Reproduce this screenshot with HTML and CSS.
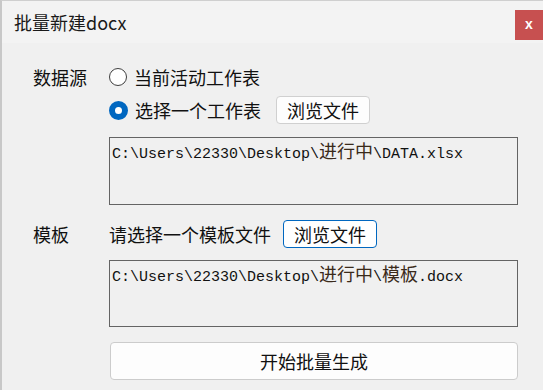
FILE: index.html
```html
<!DOCTYPE html>
<html>
<head>
    <title>批量新建docx</title>
    <link rel="stylesheet" href="styles.css">
</head>
<body>
    <div class="window">
        <div class="titlebar">
            <span class="title">批量新建docx</span>
            <span class="close">x</span>
        </div>
        <div class="content">
            <div class="section">
                <div class="label">数据源</div>
                <div class="field">
                    <div class="option">
                        <span class="radio"></span>
                        <span>当前活动工作表</span>
                    </div>
                    <div class="option option-second">
                        <span class="radio checked"></span>
                        <span>选择一个工作表</span>
                        <button class="browse browse-sheet">浏览文件</button>
                    </div>
                    <div class="path path-data">C:\Users\22330\Desktop\<span class="cjk">进行中</span>\DATA.xlsx</div>
                </div>
            </div>
            <div class="section section-template">
                <div class="label">模板</div>
                <div class="field">
                    <div class="option">
                        <span>请选择一个模板文件</span>
                        <button class="browse browse-template focused">浏览文件</button>
                    </div>
                    <div class="path path-template">C:\Users\22330\Desktop\<span class="cjk">进行中</span>\<span class="cjk">模板</span>.docx</div>
                    <button class="generate">开始批量生成</button>
                </div>
            </div>
        </div>
    </div>
</body>
</html>
```

FILE: styles.css
```css
html, body {
    margin: 0;
    padding: 0;
    background-color: #f0f0f0;
}
.window {
    width: 541px;
    height: 389px;
    border-top: 1px solid #cfcfcf;
    border-left: 2px solid #c8c8c8;
    font-family: "Noto Sans CJK SC", "Noto Sans", sans-serif;
    color: #111;
    overflow: hidden;
}
.titlebar {
    height: 42px;
    background-color: #f3f3f3;
    display: flex;
    align-items: center;
    justify-content: space-between;
    padding-left: 12px;
}
.title {
    font-size: 18px;
    color: #1a1a1a;
    margin-top: -1px;
}
.close {
    align-self: flex-start;
    margin-top: 9px;
    width: 28px;
    height: 30px;
    background-color: #c75050;
    color: #fff;
    font-family: "Liberation Sans", sans-serif;
    font-weight: bold;
    font-size: 14px;
    line-height: 28px;
    text-align: center;
}
.content {
    padding: 20px 0 0 31px;
}
.section {
    display: flex;
}
.section-template {
    margin-top: 15px;
}
.label {
    width: 76px;
    font-size: 18px;
    line-height: 28px;
    flex-shrink: 0;
}
.field {
    width: 409px;
    display: flex;
    flex-direction: column;
}
.option {
    display: flex;
    align-items: center;
    height: 28px;
    font-size: 18px;
}
.option-second {
    margin-top: 5px;
}
.radio {
    width: 16px;
    height: 16px;
    border: 1.5px solid #3f3f3f;
    border-radius: 50%;
    margin-right: 7px;
    background-color: #fff;
    box-sizing: content-box;
}
.radio.checked {
    width: 7px;
    height: 7px;
    border: 6px solid #0067c0;
    background-color: #fff;
}
.browse {
    width: 94px;
    height: 28px;
    padding: 0;
    font-family: "Noto Sans CJK SC", sans-serif;
    font-size: 18px;
    line-height: 24px;
    color: #111;
    background-color: #fdfdfd;
    border: 1px solid #d0d0d0;
    border-radius: 4px;
}
.browse-sheet {
    margin-left: 15px;
}
.browse-template {
    margin-left: 12px;
}
.focused {
    border-color: #0067c0;
    background-color: #fff;
}
.path {
    border: 1px solid #646464;
    padding: 2px 2px 0 2px;
    box-sizing: border-box;
    font-family: "Liberation Mono", monospace;
    font-size: 15px;
    line-height: 20px;
    color: #111;
}
.path .cjk {
    font-family: "Noto Sans CJK SC", sans-serif;
    font-size: 18px;
    line-height: 20px;
    color: #3a2a1a;
}
.path-data {
    margin-top: 13px;
    height: 68px;
}
.path-template {
    margin-top: 12px;
    height: 67px;
}
.generate {
    margin-top: 15px;
    height: 38px;
    width: 408px;
    margin-left: 1px;
    font-family: "Noto Sans CJK SC", sans-serif;
    font-size: 18px;
    color: #111;
    background-color: #fdfdfd;
    border: 1px solid #cccccc;
    border-radius: 4px;
}
```
